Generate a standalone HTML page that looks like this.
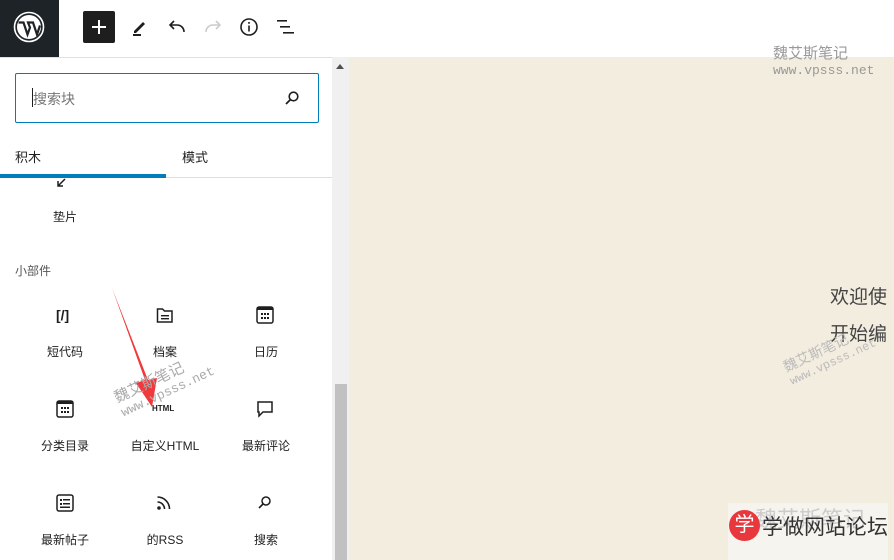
<!DOCTYPE html>
<html><head><meta charset="utf-8"><style>
*{margin:0;padding:0;box-sizing:border-box}
body{width:894px;height:560px;overflow:hidden;background:#fff;font-family:"Liberation Sans","Noto Sans CJK SC",sans-serif;position:relative;color:#1e1e1e}
.a{position:absolute}
.lab{position:absolute;font-size:12px;color:#1e1e1e;text-align:center;width:100px}
.ic{position:absolute}
</style></head><body>
<div class="a" style="left:0;top:0;width:59px;height:57px;background:#1e2327"></div>
<svg class="a" style="left:13px;top:11px" width="32" height="32" viewBox="0 0 32 32"><circle cx="16" cy="16" r="14.5" fill="none" stroke="#fff" stroke-width="1.6"/><circle cx="16" cy="16" r="12" fill="#fff"/><path d="M5.5 11.5h5l4 12 2.5-7-2-5h5l4 12 3-9" stroke="#1e2327" stroke-width="2.2" fill="none"/></svg>
<div class="a" style="left:83px;top:11px;width:32px;height:32px;background:#1e1e1e;border-radius:2px"></div>
<div class="a" style="left:92px;top:26px;width:14px;height:2px;background:#fff"></div>
<div class="a" style="left:98px;top:20px;width:2px;height:14px;background:#fff"></div>
<svg class="a" style="left:130px;top:17px" width="20" height="20"><path d="M4 14l9-9 2 2-9 9H4z" fill="#1e1e1e"/><rect x="3" y="17" width="8" height="2" fill="#1e1e1e"/></svg>
<svg class="a" style="left:167px;top:17px" width="20" height="20"><path d="M17 15c0-4-3-7-7-7H3M7 4L3 8l4 4" stroke="#1e1e1e" stroke-width="1.6" fill="none"/></svg>
<svg class="a" style="left:203px;top:17px" width="20" height="20"><path d="M3 15c0-4 3-7 7-7h7M13 4l4 4-4 4" stroke="#ccc" stroke-width="1.6" fill="none"/></svg>
<svg class="a" style="left:239px;top:17px" width="20" height="20"><circle cx="10" cy="10" r="8" stroke="#1e1e1e" stroke-width="1.6" fill="none"/><rect x="9.2" y="8.5" width="1.6" height="6" fill="#1e1e1e"/><rect x="9.2" y="5" width="1.6" height="1.8" fill="#1e1e1e"/></svg>
<svg class="a" style="left:275px;top:17px" width="22" height="20"><rect x="2" y="3" width="10" height="1.6" fill="#1e1e1e"/><rect x="5" y="9" width="10" height="1.6" fill="#1e1e1e"/><rect x="8" y="15" width="11" height="1.6" fill="#1e1e1e"/></svg>
<div class="a" style="left:0;top:57px;width:332px;height:1px;background:#e0e0e0"></div>
<div class="a" style="left:332px;top:57px;width:17px;height:503px;background:#f0f0f0"></div>
<div class="a" style="left:335px;top:384px;width:12px;height:176px;background:#c1c1c1"></div>
<div class="a" style="left:336px;top:64px;width:0;height:0;border-left:4px solid transparent;border-right:4px solid transparent;border-bottom:5px solid #505050"></div>
<div class="a" style="left:349px;top:57px;width:545px;height:503px;background:#f3ede0"></div>
<div class="a" style="left:15px;top:73px;width:304px;height:50px;border:1.5px solid #007cba;border-radius:2px"></div>
<div class="a" style="left:32px;top:88px;width:1px;height:19px;background:#1e1e1e"></div>
<div class="a" style="left:33px;top:89px;font-size:14px;color:#757575">搜索块</div>
<svg class="a" style="left:284px;top:90px" width="16" height="16"><circle cx="9.5" cy="6.5" r="4.3" stroke="#1e1e1e" stroke-width="1.6" fill="none"/><path d="M6.5 9.5L2 14" stroke="#1e1e1e" stroke-width="1.8"/></svg>
<div class="a" style="left:15px;top:147px;font-size:13px">积木</div>
<div class="a" style="left:182px;top:147px;font-size:13px">模式</div>
<div class="a" style="left:0;top:177px;width:332px;height:1px;background:#ddd"></div>
<div class="a" style="left:0;top:174px;width:166px;height:4px;background:#007cba"></div>
<svg class="a" style="left:56px;top:178px" width="16" height="10"><path d="M2 8l7-7M2 3v5h5" stroke="#1e1e1e" stroke-width="1.5" fill="none"/></svg>
<div class="lab" style="left:15px;top:208px">垫片</div>
<div class="a" style="left:15px;top:262px;font-size:12px;color:#555">小部件</div>
<div class="a" style="left:56px;top:307px;font-size:14px;font-weight:bold">[/]</div>
<svg class="ic" style="left:156px;top:306px" width="18" height="18"><path d="M1.5 3h5l2 2h7.5v11h-14.5z" stroke="#1e1e1e" stroke-width="1.5" fill="none"/><rect x="5" y="9" width="8" height="1.4" fill="#1e1e1e"/><rect x="5" y="12" width="8" height="1.4" fill="#1e1e1e"/></svg>
<svg class="ic" style="left:256px;top:305px" width="18" height="20"><rect x="1" y="2" width="16" height="16" rx="2" stroke="#1e1e1e" stroke-width="1.5" fill="none"/><rect x="1" y="2" width="16" height="3" fill="#1e1e1e"/><g fill="#1e1e1e"><rect x="5" y="8" width="2" height="2"/><rect x="8" y="8" width="2" height="2"/><rect x="11" y="8" width="2" height="2"/><rect x="5" y="12" width="2" height="2"/><rect x="8" y="12" width="2" height="2"/><rect x="11" y="12" width="2" height="2"/></g></svg>
<div class="lab" style="left:15px;top:343px">短代码</div>
<div class="lab" style="left:115px;top:343px">档案</div>
<div class="lab" style="left:216px;top:343px">日历</div>
<svg class="ic" style="left:56px;top:399px" width="18" height="20"><rect x="1" y="2" width="16" height="16" rx="2" stroke="#1e1e1e" stroke-width="1.5" fill="none"/><rect x="1" y="2" width="16" height="3" fill="#1e1e1e"/><g fill="#1e1e1e"><rect x="5" y="8" width="2" height="2"/><rect x="8" y="8" width="2" height="2"/><rect x="11" y="8" width="2" height="2"/><rect x="5" y="12" width="2" height="2"/><rect x="8" y="12" width="2" height="2"/><rect x="11" y="12" width="2" height="2"/></g></svg>
<div class="a" style="left:152px;top:404px;font-size:8px;font-weight:bold">HTML</div>
<svg class="ic" style="left:256px;top:400px" width="18" height="18"><path d="M2 2h14v10H7l-4 4V12H2z" stroke="#1e1e1e" stroke-width="1.5" fill="none"/></svg>
<div class="lab" style="left:15px;top:437px">分类目录</div>
<div class="lab" style="left:115px;top:437px">自定义HTML</div>
<div class="lab" style="left:216px;top:437px">最新评论</div>
<svg class="ic" style="left:56px;top:494px" width="18" height="18"><rect x="1" y="1" width="16" height="16" rx="2" stroke="#1e1e1e" stroke-width="1.5" fill="none"/><g fill="#1e1e1e"><rect x="4" y="5" width="2" height="2"/><rect x="7" y="5" width="7" height="1.5"/><rect x="4" y="9" width="2" height="2"/><rect x="7" y="9" width="7" height="1.5"/><rect x="4" y="12.5" width="10" height="1.5"/></g></svg>
<svg class="ic" style="left:156px;top:493px" width="18" height="18"><circle cx="3" cy="15" r="1.8" fill="#1e1e1e"/><path d="M1.5 9a7 7 0 0 1 7 7M1.5 4a12 12 0 0 1 12 12" stroke="#1e1e1e" stroke-width="1.6" fill="none"/></svg>
<svg class="ic" style="left:258px;top:495px" width="14" height="14"><circle cx="8" cy="6" r="4" stroke="#1e1e1e" stroke-width="1.5" fill="none"/><path d="M5 9l-4 4" stroke="#1e1e1e" stroke-width="1.6"/></svg>
<div class="lab" style="left:15px;top:531px">最新帖子</div>
<div class="lab" style="left:115px;top:531px">的RSS</div>
<div class="lab" style="left:216px;top:531px">搜索</div>
<svg class="a" style="left:105px;top:285px" width="60" height="125"><path d="M7 3L40 95l-9 3 16 24 5-29-9 2z" fill="#f0393c"/></svg>
<div class="a" style="left:112px;top:392px;font-size:15px;color:#aaa;transform:rotate(-25deg);transform-origin:left top;line-height:15px;white-space:nowrap">魏艾斯笔记<br><span style="font-family:'Liberation Mono';font-size:13px">www.vpsss.net</span></div>
<div class="a" style="left:773px;top:46px;font-size:15px;color:#999;line-height:16px">魏艾斯笔记<br><span style="font-family:'Liberation Mono';font-size:13px">www.vpsss.net</span></div>
<div class="a" style="left:830px;top:282px;font-size:19px;color:#444;white-space:nowrap">欢迎使</div>
<div class="a" style="left:830px;top:319px;font-size:19px;color:#444;white-space:nowrap">开始编</div>
<div class="a" style="left:783px;top:340px;font-size:14px;color:#bbb;transform:rotate(-25deg);line-height:14px;white-space:nowrap">魏艾斯笔记<br><span style="font-family:'Liberation Mono';font-size:12px">www.vpsss.net</span></div>
<div class="a" style="left:728px;top:503px;width:160px;height:57px;background:#f6f4ef"></div>
<div class="a" style="left:755px;top:502px;font-size:22px;color:#ccc">魏艾斯笔记</div>
<div class="a" style="left:729px;top:510px;width:31px;height:31px;border-radius:50%;background:#e8383d;color:#fff;font-size:20px;text-align:center;line-height:30px">学</div>
<div class="a" style="left:762px;top:511px;font-size:21px;color:#333;white-space:nowrap">学做网站论坛</div>
</body></html>
